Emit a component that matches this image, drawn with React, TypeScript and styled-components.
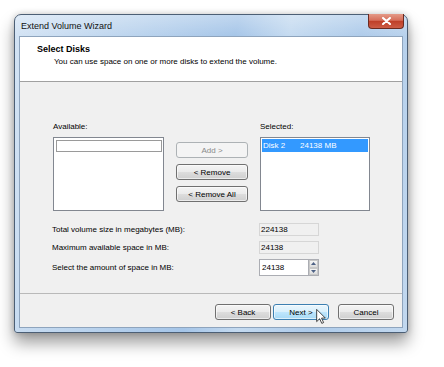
import React from 'react';
import styled, { createGlobalStyle, css } from 'styled-components';

const GlobalStyle = createGlobalStyle`
  body {
    margin: 0;
    background: #ffffff;
    font-family: "Liberation Sans", Arial, sans-serif;
  }
`;

const Stage = styled.div`
  width: 444px;
  height: 367px;
  box-sizing: border-box;
  padding: 14px 0 0 14px;
  overflow: hidden;
`;

const Window = styled.div`
  position: relative;
  width: 394px;
  height: 319px;
  box-sizing: border-box;
  display: flex;
  flex-direction: column;
  padding: 0 4px 4px;
  border: 1px solid #4c5f75;
  border-radius: 7px 7px 3px 3px;
  background:
    linear-gradient(180deg, rgba(255, 255, 255, 0.3) 0px, rgba(255, 255, 255, 0) 22px),
    linear-gradient(100deg, #d3e3f4 0%, #bdd5ee 25%, #a5c5e8 50%, #c4daf0 62%, #aecbea 78%, #c2d8ef 100%);
  box-shadow: 0 10px 16px rgba(0, 0, 0, 0.38), 0 0 6px rgba(0, 0, 0, 0.2);
`;

const TitleBar = styled.div`
  height: 21px;
  display: flex;
  align-items: center;
  justify-content: space-between;
  padding-left: 2px;
`;

const Title = styled.span`
  font-size: 9px;
  color: #111;
`;

const CloseButton = styled.div`
  align-self: flex-start;
  width: 36px;
  height: 15px;
  box-sizing: border-box;
  margin: -1px -1px 0 0;
  border: 1px solid #6b2a20;
  border-top: none;
  border-radius: 0 0 4px 4px;
  background: linear-gradient(180deg, #e49a88 0%, #d66e5a 45%, #bf3f28 52%, #cc5c45 100%);
  display: flex;
  align-items: center;
  justify-content: center;
`;

const Client = styled.div`
  flex: 1;
  display: flex;
  flex-direction: column;
  border: 1px solid #8ea4bd;
  background: #f0f0f0;
`;

const Header = styled.div`
  height: 45px;
  box-sizing: border-box;
  background: #ffffff;
  border-bottom: 1px solid #a0a0a0;
  padding: 7px 0 0 17px;
`;

const HeaderTitle = styled.div`
  font-size: 9px;
  font-weight: bold;
  line-height: 11px;
  color: #000;
`;

const HeaderText = styled.div`
  font-size: 8px;
  line-height: 10px;
  margin: 2px 0 0 17px;
  color: #000;
`;

const Body = styled.div`
  flex: 1;
  padding: 40px 0 0 33px;
`;

const Picker = styled.div`
  display: grid;
  grid-template-columns: 111px 72px 110px;
  grid-template-rows: 10px 74px;
  column-gap: 12px;
  row-gap: 5px;
`;

const Label = styled.div<{ $col?: number }>`
  font-size: 8px;
  line-height: 10px;
  color: #000;
  grid-column: ${(p) => p.$col ?? 'auto'};
  white-space: nowrap;
`;

const ListBox = styled.div<{ $col: number }>`
  grid-column: ${(p) => p.$col};
  grid-row: 2;
  box-sizing: border-box;
  border: 1px solid #828790;
  background: #ffffff;
  padding: 1px;
`;

const ListRow = styled.div<{ $selected?: boolean }>`
  height: 13px;
  box-sizing: border-box;
  display: flex;
  align-items: center;
  font-size: 8px;
  padding-left: 1px;
  ${(p) =>
    p.$selected
      ? css`
          background: #3399ff;
          color: #ffffff;
        `
      : css`
          margin: 1px 0 0 1px;
          height: 12px;
          border: 1px solid #9a9a9a;
        `}
`;

const Cell = styled.span<{ $w?: number }>`
  width: ${(p) => (p.$w ? `${p.$w}px` : 'auto')};
`;

const ButtonColumn = styled.div`
  grid-column: 2;
  grid-row: 2;
  display: flex;
  flex-direction: column;
  gap: 6px;
  padding-top: 5px;
`;

type Variant = 'normal' | 'hot' | 'disabled';

const Button = styled.div<{ $variant?: Variant; $w?: number }>`
  width: ${(p) => (p.$w ? `${p.$w}px` : '100%')};
  height: 16px;
  box-sizing: border-box;
  border-radius: 3px;
  font-size: 8px;
  display: flex;
  align-items: center;
  justify-content: center;
  color: #000;
  border: 1px solid #707070;
  background: linear-gradient(180deg, #f4f4f4 0%, #ebebeb 48%, #dddddd 52%, #cfcfcf 100%);
  box-shadow: inset 0 0 0 1px rgba(255, 255, 255, 0.6);
  ${(p) =>
    p.$variant === 'disabled' &&
    css`
      color: #8a8a8a;
      border-color: #adb2b5;
      background: #f4f4f4;
      box-shadow: none;
    `}
  ${(p) =>
    p.$variant === 'hot' &&
    css`
      border-color: #3c7fb1;
      background: linear-gradient(180deg, #eaf6fd 0%, #d9f0fc 48%, #bee6fd 52%, #a7d9f5 100%);
    `}
`;

const SizeGrid = styled.div`
  display: grid;
  grid-template-columns: 207px 60px;
  grid-template-rows: 13px 13px 17px;
  row-gap: 5px;
  margin-top: 12px;
  align-items: center;
  margin-left: -1px;
`;

const Field = styled.div<{ $readonly?: boolean }>`
  height: 100%;
  box-sizing: border-box;
  border: 1px solid ${(p) => (p.$readonly ? '#d6d6d6' : '#abadb3')};
  background: ${(p) => (p.$readonly ? '#f0f0f0' : '#ffffff')};
  font-size: 8px;
  display: flex;
  align-items: center;
  padding-left: ${(p) => (p.$readonly ? '1px' : '2px')};
  color: #000;
`;

const SpinWrap = styled.div`
  height: 100%;
  display: flex;
`;

const SpinInput = styled(Field)`
  flex: 1;
  border-right: none;
`;

const Spinner = styled.div`
  width: 11px;
  display: flex;
  flex-direction: column;
  border: 1px solid #abadb3;
  box-sizing: border-box;
`;

const SpinHalf = styled.div`
  flex: 1;
  display: flex;
  align-items: center;
  justify-content: center;
  background: linear-gradient(180deg, #f6f6f6, #dcdcdc);
  border: 1px solid #c8c8c8;
`;

const Footer = styled.div`
  height: 34px;
  box-sizing: border-box;
  border-top: 1px solid #b9b9b9;
  display: flex;
  justify-content: flex-end;
  align-items: flex-start;
  gap: 9px;
  padding: 10px 8px 0 0;
`;

const NavGroup = styled.div`
  display: flex;
  gap: 2px;
`;

const Cursor = styled.svg`
  position: absolute;
  left: 301px;
  top: 294px;
`;

function Arrow({ up }: { up?: boolean }) {
  return (
    <svg width="5" height="3" viewBox="0 0 5 3">
      <path d={up ? 'M0 3 L2.5 0 L5 3 Z' : 'M0 0 L2.5 3 L5 0 Z'} fill="#4d6185" />
    </svg>
  );
}

export default function App() {
  return (
    <Stage>
      <GlobalStyle />
      <Window>
        <TitleBar>
          <Title>Extend Volume Wizard</Title>
          <CloseButton>
            <svg width="9" height="8" viewBox="0 0 9 8">
              <path d="M1 1 L8 7 M8 1 L1 7" stroke="#ffffff" strokeWidth="2" strokeLinecap="round" />
              <path d="M1 1 L8 7 M8 1 L1 7" stroke="#ffffff" strokeWidth="1.2" />
            </svg>
          </CloseButton>
        </TitleBar>
        <Client>
          <Header>
            <HeaderTitle>Select Disks</HeaderTitle>
            <HeaderText>You can use space on one or more disks to extend the volume.</HeaderText>
          </Header>
          <Body>
            <Picker>
              <Label $col={1}>Available:</Label>
              <Label $col={3}>Selected:</Label>
              <ListBox $col={1}>
                <ListRow />
              </ListBox>
              <ButtonColumn>
                <Button $variant="disabled">Add &gt;</Button>
                <Button>&lt; Remove</Button>
                <Button>&lt; Remove All</Button>
              </ButtonColumn>
              <ListBox $col={3}>
                <ListRow $selected>
                  <Cell $w={37}>Disk 2</Cell>
                  <Cell>24138 MB</Cell>
                </ListRow>
              </ListBox>
            </Picker>
            <SizeGrid>
              <Label>Total volume size in megabytes (MB):</Label>
              <Field $readonly>224138</Field>
              <Label>Maximum available space in MB:</Label>
              <Field $readonly>24138</Field>
              <Label>Select the amount of space in MB:</Label>
              <SpinWrap>
                <SpinInput>24138</SpinInput>
                <Spinner>
                  <SpinHalf>
                    <Arrow up />
                  </SpinHalf>
                  <SpinHalf>
                    <Arrow />
                  </SpinHalf>
                </Spinner>
              </SpinWrap>
            </SizeGrid>
          </Body>
          <Footer>
            <NavGroup>
              <Button $w={56}>&lt; Back</Button>
              <Button $w={56} $variant="hot">Next &gt;</Button>
            </NavGroup>
            <Button $w={56}>Cancel</Button>
          </Footer>
        </Client>
        <Cursor width="10" height="15" viewBox="0 0 12 19">
          <path
            d="M0.5 0.5 L0.5 16 L4.3 12.3 L7 18.2 L9.3 17.2 L6.7 11.5 L11.5 11.5 Z"
            fill="#ffffff"
            stroke="#1a1a1a"
            strokeWidth="1"
            strokeLinejoin="round"
          />
        </Cursor>
      </Window>
    </Stage>
  );
}
